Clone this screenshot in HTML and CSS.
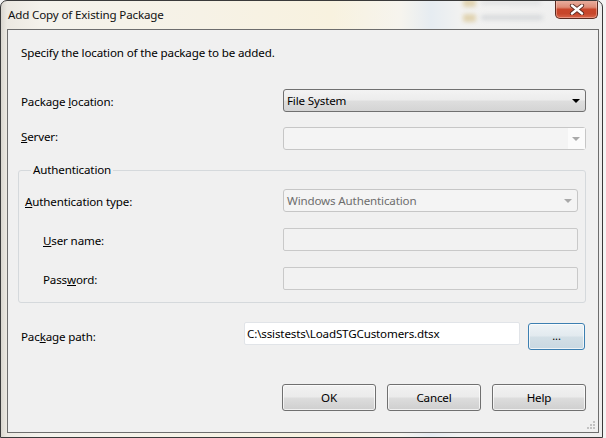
FILE: index.html
```html
<!DOCTYPE html>
<html>
<head>
<meta charset="utf-8">
<title>Add Copy of Existing Package</title>
<link rel="stylesheet" href="styles.css">
</head>
<body>
<div class="window">
  <div class="titlebar">
    <span class="title">Add Copy of Existing Package</span>
    <div class="glass">
      <span class="blob folder f1"></span>
      <span class="blob txt t1"></span>
      <span class="blob folder f2"></span>
      <span class="blob txt t2"></span>
    </div>
    <div class="close">
      <svg width="16" height="11" viewBox="0 0 16 11">
        <path d="M3 1.5 L13 9.5 M13 1.5 L3 9.5" stroke="#5a2a22" stroke-width="4.2" stroke-linecap="round"/>
        <path d="M3 1.5 L13 9.5 M13 1.5 L3 9.5" stroke="#ffffff" stroke-width="2.4" stroke-linecap="round"/>
      </svg>
    </div>
  </div>
  <div class="client">
    <p class="intro">Specify the location of the package to be added.</p>
    <div class="form">
      <div class="row row-location">
        <span class="label">Package <u>l</u>ocation:</span>
        <div class="combo combo-active"><span class="value">File System</span><span class="drop"><span class="arrow"></span></span></div>
      </div>
      <div class="row row-server">
        <span class="label label-up"><u>S</u>erver:</span>
        <div class="combo combo-disabled"><span class="value"></span><span class="drop drop-light"><span class="arrow arrow-gray"></span></span></div>
      </div>
      <div class="group">
        <span class="group-title">Authentication</span>
        <div class="row">
          <span class="label"><u>A</u>uthentication type:</span>
          <div class="combo combo-disabled"><span class="value gray">Windows Authentication</span><span class="drop"><span class="arrow arrow-gray"></span></span></div>
        </div>
        <div class="row row-sub">
          <span class="label indent"><u>U</u>ser name:</span>
          <div class="textbox disabled"></div>
        </div>
        <div class="row row-sub">
          <span class="label indent">Pass<u>w</u>ord:</span>
          <div class="textbox disabled"></div>
        </div>
      </div>
      <div class="row row-path">
        <span class="label">Pac<u>k</u>age path:</span>
        <div class="textbox path">C:\ssistests\LoadSTGCustomers.dtsx</div>
        <div class="btn btn-focus">...</div>
      </div>
    </div>
    <div class="buttons">
      <div class="btn">OK</div>
      <div class="btn">Cancel</div>
      <div class="btn">Help</div>
    </div>
    <svg class="grip" width="10" height="10" viewBox="0 0 10 10">
      <rect x="7" y="1" width="2" height="2" fill="#c2c2c2"/>
      <rect x="4" y="4" width="2" height="2" fill="#c2c2c2"/>
      <rect x="7" y="4" width="2" height="2" fill="#c2c2c2"/>
      <rect x="1" y="7" width="2" height="2" fill="#c2c2c2"/>
      <rect x="4" y="7" width="2" height="2" fill="#c2c2c2"/>
      <rect x="7" y="7" width="2" height="2" fill="#c2c2c2"/>
    </svg>
  </div>
</div>
</body>
</html>
```
FILE: styles.css
```css
html, body {
  margin: 0;
  padding: 0;
}
body {
  width: 606px;
  height: 438px;
  overflow: hidden;
  background: #f4f4f4;
  font-family: "Noto Sans", "Open Sans", sans-serif;
  font-size: 11.6px;
  letter-spacing: -0.15px;
  color: #000;
}
.window {
  position: relative;
  width: 603px;
  height: 438px;
  box-sizing: border-box;
  border: 1px solid #3a3a3a;
  border-radius: 7px 7px 0 0;
  padding: 0 3px 0 6px;
  display: flex;
  flex-direction: column;
  overflow: hidden;
  background: linear-gradient(to right, #d9d6cf 0px, #ece9e2 6px, #f4f2ec 40px, #f6f2e6 200px, #f8f2df 330px, #f6f4ee 400px, #e6ecf1 430px, #f2f2f1 460px, #eeeeee 600px);
}
.titlebar {
  height: 28px;
  display: flex;
  align-items: flex-start;
  position: relative;
}
.title {
  margin-top: 6px;
  margin-left: 1px;
  line-height: 16px;
  color: #111;
  white-space: nowrap;
}
.glass {
  position: absolute;
  left: 450px;
  top: -2px;
  width: 100px;
  height: 30px;
  filter: blur(2px);
  opacity: 0.7;
}
.blob {
  position: absolute;
  display: block;
}
.folder {
  width: 13px;
  height: 8px;
  background: #d9c695;
  border-radius: 2px;
}
.f1 { left: 6px; top: 0; }
.f2 { left: 6px; top: 15px; }
.txt {
  height: 5px;
  background: #cdd0d4;
  border-radius: 2px;
}
.t1 { left: 24px; top: 1px; width: 60px; opacity: 0.6; }
.t2 { left: 24px; top: 16px; width: 62px; }
.close {
  margin-left: auto;
  margin-right: 1px;
  margin-top: -1px;
  width: 43px;
  height: 19px;
  box-sizing: border-box;
  border: 1px solid #5b2a20;
  border-top: none;
  border-radius: 0 0 5px 5px;
  background: linear-gradient(#eab3a4 0%, #de8c76 40%, #c9462b 52%, #c7462b 75%, #d8654a 100%);
  box-shadow: inset 0 0 0 1px rgba(255, 210, 200, 0.45);
  display: flex;
  align-items: center;
  justify-content: center;
  position: relative;
  z-index: 1;
}
.close svg { display: block; }
.client {
  position: relative;
  width: 592px;
  height: 404px;
  box-sizing: border-box;
  border: 1px solid #6d6d6d;
  background: #f0f0f0;
  padding: 15px 12px 0 13px;
  display: flex;
  flex-direction: column;
}
.intro {
  margin: 0;
  line-height: 16px;
  height: 16px;
}
.form {
  display: flex;
  flex-direction: column;
  margin-top: 28px;
}
.row {
  display: flex;
  align-items: center;
  height: 23px;
}
.row .label {
  flex: 0 0 262px;
  line-height: 16px;
  padding-top: 2px;
}
.row .label.label-up {
  padding-top: 0;
  padding-bottom: 4px;
}
.row-server { margin-top: 15px; }
.label.indent { padding-left: 18px; box-sizing: border-box; }
.combo {
  flex: 1;
  height: 23px;
  box-sizing: border-box;
  border-radius: 3px;
  display: flex;
  align-items: center;
}
.combo .value {
  flex: 1;
  padding-left: 3px;
  line-height: 16px;
  white-space: nowrap;
}
.combo .value.gray { color: #6d6d6d; }
.combo-active {
  border: 1px solid #707070;
  background: linear-gradient(#f3f3f3 0%, #ececec 48%, #dedede 52%, #d4d4d4 100%);
}
.combo-disabled {
  border: 1px solid #c6c6c6;
  background: #f4f4f4;
}
.drop {
  width: 17px;
  height: 100%;
  display: flex;
  align-items: center;
  justify-content: center;
}
.drop-light { background: #fbfbfb; }
.arrow {
  width: 0;
  height: 0;
  border-left: 4px solid transparent;
  border-right: 4px solid transparent;
  border-top: 4px solid #000;
  margin-left: -1px;
}
.arrow-gray { border-top-color: #a9a9a9; }
.group {
  margin: 20px 0 0 -3px;
  width: 568px;
  box-sizing: border-box;
  border: 1px solid #d5d9dc;
  border-radius: 3px;
  padding: 0 7px 12px 6px;
  display: flex;
  flex-direction: column;
}
.group-title {
  align-self: flex-start;
  margin: -9px 0 11px 6px;
  padding: 0 2px;
  line-height: 16px;
  background: #f0f0f0;
}
.group .row .label { flex-basis: 258px; }
.row-sub { margin-top: 16px; }
.textbox {
  flex: 1;
  height: 23px;
  box-sizing: border-box;
  border-radius: 2px;
}
.textbox.disabled {
  border: 1px solid #c9c9c9;
  background: #f2f2f2;
}
.row-path {
  margin-top: 19px;
  height: 27px;
}
.row-path .label { flex: 0 0 223px; }
.textbox.path {
  flex: 0 0 276px;
  align-self: flex-start;
  border: 1px solid #e1e4e8;
  background: #fff;
  line-height: 16px;
  padding: 3px 0 0 2px;
  white-space: nowrap;
}
.btn {
  height: 27px;
  box-sizing: border-box;
  border: 1px solid #707070;
  border-radius: 3px;
  background: linear-gradient(#f2f2f2 0%, #ebebeb 48%, #dddddd 52%, #cfcfcf 100%);
  box-shadow: inset 0 0 0 1px rgba(255, 255, 255, 0.7);
  display: flex;
  align-items: center;
  justify-content: center;
  line-height: 16px;
}
.btn-focus {
  width: 57px;
  margin-left: 8px;
  margin-top: 1px;
  align-self: flex-start;
  border-color: #3c7fb1;
  background: linear-gradient(#eef3f6 0%, #e2eaef 48%, #d3dfe6 52%, #c9d8e1 100%);
  font-size: 11px;
  padding-bottom: 1px;
}
.buttons {
  display: flex;
  justify-content: flex-end;
  gap: 11px;
  margin-top: 35px;
  padding-right: 0;
}
.buttons .btn { width: 94px; }
.grip {
  position: absolute;
  right: 2px;
  bottom: 2px;
}
```
